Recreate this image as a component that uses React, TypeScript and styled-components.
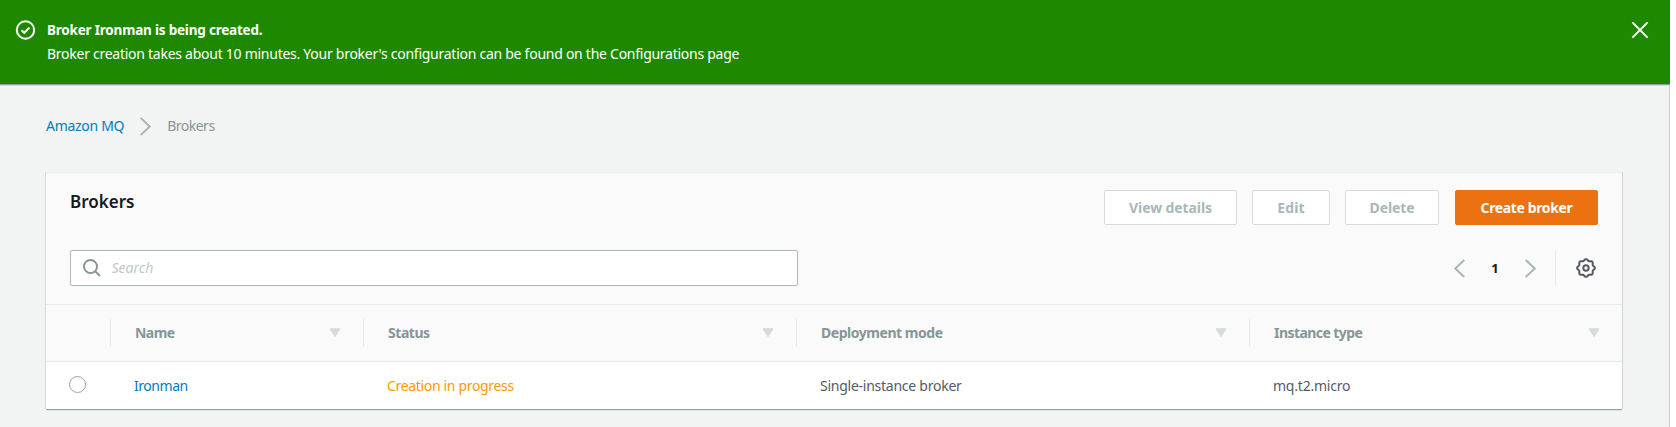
import React from "react";
import styled, { createGlobalStyle } from "styled-components";

const GlobalStyle = createGlobalStyle`
  * { box-sizing: border-box; }
  body {
    margin: 0;
    background: #fff;
    color: #545b64;
    font: 400 14px/20px "Noto Sans", "Open Sans", sans-serif;
  }
`;

const Page = styled.div`
  width: 1670px;
  height: 427px;
  overflow: hidden;
  background: #f2f3f3;
  box-shadow: inset -1px 0 0 #c9cdcd;
`;

const Text = styled.span<{ $track?: number }>`
  white-space: nowrap;
  letter-spacing: ${(p) => p.$track ?? 0}px;
`;

const Banner = styled.section`
  display: flex;
  align-items: flex-start;
  height: 84px;
  padding: 18px 20px 0 15px;
  background: #1e8900;
  color: #fff;
  line-height: 24px;
  box-shadow: 0 1px 0 #949c9e, 0 2px 0 #d8dbdb;
  > svg { flex: none; margin-top: 1px; }
`;

const BannerBody = styled.div`
  display: flex;
  flex: 1;
  flex-direction: column;
  align-items: flex-start;
  padding-left: 11px;
`;

const BannerTitle = styled(Text)`
  font-size: 13.5px;
  font-weight: 700;
`;

const Breadcrumb = styled.nav`
  display: flex;
  align-items: center;
  height: 20px;
  margin: 32px 0 36px 46px;
  svg { margin: 0 16px; }
`;

const Link = styled(Text)`
  color: #007dbc;
`;

const Crumb = styled(Text)`
  color: #879596;
`;

const Card = styled.main`
  width: 1576px;
  margin-left: 46px;
  background: #fff;
  border-top: 1px solid #eaeded;
  box-shadow: 0 1px 0 #98a2a4, 0 2px 0 #dfe2e2, 1px 0 0 #cfd3d4, -1px 0 0 #d5d9d9;
`;

const CardHeader = styled.header`
  padding: 17px 24px 18px;
  background: #fafafa;
`;

const TitleRow = styled.div`
  display: flex;
  align-items: flex-start;
  justify-content: space-between;
  height: 35px;
`;

const Title = styled.h1`
  margin: 0;
  color: #16191f;
  font-size: 17px;
  font-weight: 600;
  line-height: 24px;
`;

const Actions = styled.div`
  display: flex;
  gap: 15px;
`;

const Button = styled.button<{ $width: number; $primary?: boolean; $track?: number }>`
  width: ${(p) => p.$width}px;
  height: 35px;
  margin: 0 0 0 ${(p) => (p.$primary ? 1 : 0)}px;
  padding: 0;
  border: 1px solid ${(p) => (p.$primary ? "#ec7211" : "#d5dbdb")};
  border-radius: 2px;
  background: ${(p) => (p.$primary ? "#ec7211" : "#fff")};
  color: ${(p) => (p.$primary ? "#fff" : "#aab7b8")};
  font: 700 14px/20px "Noto Sans", "Open Sans", sans-serif;
  letter-spacing: ${(p) => p.$track ?? 0}px;
  white-space: nowrap;
`;

const FilterRow = styled.div`
  display: flex;
  align-items: center;
  justify-content: space-between;
  height: 36px;
  margin-top: 25px;
`;

const SearchBox = styled.label`
  display: flex;
  align-items: center;
  gap: 10.5px;
  width: 728px;
  height: 36px;
  padding-left: 12px;
  background: #fff;
  border: 1px solid #aab7b8;
  border-radius: 2px;
`;

const Placeholder = styled(Text)`
  color: #bfc8c9;
  font-style: italic;
`;

const Pagination = styled.div`
  display: flex;
  align-items: center;
  height: 36px;
`;

const PageNumber = styled.span`
  width: 60px;
  color: #16191f;
  font-weight: 700;
  font-size: 13px;
  text-align: center;
`;

const Settings = styled.div`
  display: flex;
  align-items: center;
  height: 36px;
  margin-left: 19px;
  padding: 0 2px 0 20px;
  border-left: 1px solid #e6eaea;
`;

const Row = styled.div`
  display: grid;
  grid-template-columns: 65px 253px 433px 453px 1fr;
  align-items: center;
`;

const HeadRow = styled(Row)`
  height: 58px;
  background: #fafafa;
  border-top: 1px solid #e6eaea;
  border-bottom: 1px solid #e6eaea;
`;

const HeadCell = styled.div`
  display: flex;
  align-items: center;
  justify-content: space-between;
  height: 28px;
  padding: 0 22.5px 0 24px;
  border-right: 1px solid #e6eaea;
  color: #879596;
  font-weight: 700;
  &:last-child { border-right: 0; padding-right: 22.5px; }
`;

const BodyRow = styled(Row)`
  height: 47px;
`;

const Cell = styled.div`
  display: flex;
  padding: 1px 0 0 23px;
`;

const Pending = styled(Text)`
  color: #ff9900;
`;

const Radio = styled.span`
  width: 17px;
  height: 17px;
  margin: -2px 0 0 23px;
  border: 1px solid #98a5a6;
  border-radius: 50%;
  background: #fff;
`;

const Chevron = ({ left = false }: { left?: boolean }) => (
  <svg width="11" height="19" viewBox="0 0 11 19" fill="none" stroke="#aab7b8" strokeWidth="2">
    <path d={left ? "M10.3 1L1.3 9.5L10.3 18" : "M.7 1L9.7 9.5L.7 18"} />
  </svg>
);

const SortArrow = () => (
  <svg width="12" height="10" viewBox="0 0 12 10">
    <path d="M1 .8H11L6 8.6Z" fill="#d5dbdb" stroke="#d5dbdb" strokeLinejoin="round" />
  </svg>
);

// Eight-lobed outline sampled around the centre of a 20x20 box.
const gearPath =
  Array.from({ length: 96 }, (_, i) => {
    const a = (i / 96) * Math.PI * 2;
    const r = 8.1 + 0.75 * Math.cos(8 * a);
    return `${i ? "L" : "M"}${(10 + r * Math.cos(a)).toFixed(2)} ${(10 + r * Math.sin(a)).toFixed(2)}`;
  }).join("") + "Z";

const columns = [
  { label: "Name", track: -0.55 },
  { label: "Status", track: -0.45 },
  { label: "Deployment mode", track: -0.46 },
  { label: "Instance type", track: -0.56 },
];

export default function App() {
  return (
    <>
      <GlobalStyle />
      <Page>
        <Banner>
          <svg width="21" height="22" viewBox="0 0 21 22" fill="none" stroke="#fff" strokeWidth="2">
            <circle cx="10.5" cy="11" r="8.7" />
            <path d="M6.5 11.2L9.3 13.8L14.4 8.6" />
          </svg>
          <BannerBody>
            <BannerTitle $track={-0.2}>Broker Ironman is being created.</BannerTitle>
            <Text $track={-0.263}>
              Broker creation takes about 10 minutes. Your broker's configuration can be found on the
              Configurations page
            </Text>
          </BannerBody>
          <svg width="20" height="22" viewBox="0 0 20 22" stroke="#fff" strokeWidth="2">
            <path d="M2.4 3.4L17.6 18.6M17.6 3.4L2.4 18.6" />
          </svg>
        </Banner>
        <Breadcrumb>
          <Link $track={-0.3}>Amazon MQ</Link>
          <Chevron />
          <Crumb $track={-0.5}>Brokers</Crumb>
        </Breadcrumb>
        <Card>
          <CardHeader>
            <TitleRow>
              <Title>Brokers</Title>
              <Actions>
                <Button $width={133} $track={-0.1}>View details</Button>
                <Button $width={78} $track={0.1}>Edit</Button>
                <Button $width={94} $track={-0.1}>Delete</Button>
                <Button $width={143} $primary $track={-0.36}>Create broker</Button>
              </Actions>
            </TitleRow>
            <FilterRow>
              <SearchBox>
                <svg width="18" height="18" viewBox="0 0 18 18" fill="none" stroke="#879596" strokeWidth="2">
                  <circle cx="7.5" cy="7.5" r="6.5" />
                  <path d="M12 12L17 17" />
                </svg>
                <Placeholder>Search</Placeholder>
              </SearchBox>
              <Pagination>
                <Chevron left />
                <PageNumber>1</PageNumber>
                <Chevron />
                <Settings>
                  <svg width="20" height="20" viewBox="0 0 20 20" fill="none" stroke="#545b64" strokeWidth="2">
                    <path d={gearPath} />
                    <circle cx="10" cy="10" r="2.7" />
                  </svg>
                </Settings>
              </Pagination>
            </FilterRow>
          </CardHeader>
          <HeadRow>
            <HeadCell />
            {columns.map((c) => (
              <HeadCell key={c.label}>
                <Text $track={c.track}>{c.label}</Text>
                <SortArrow />
              </HeadCell>
            ))}
          </HeadRow>
          <BodyRow>
            <Radio />
            <Cell><Link $track={-0.45}>Ironman</Link></Cell>
            <Cell><Pending $track={-0.33}>Creation in progress</Pending></Cell>
            <Cell><Text $track={-0.25}>Single-instance broker</Text></Cell>
            <Cell><Text $track={-0.22}>mq.t2.micro</Text></Cell>
          </BodyRow>
        </Card>
      </Page>
    </>
  );
}
